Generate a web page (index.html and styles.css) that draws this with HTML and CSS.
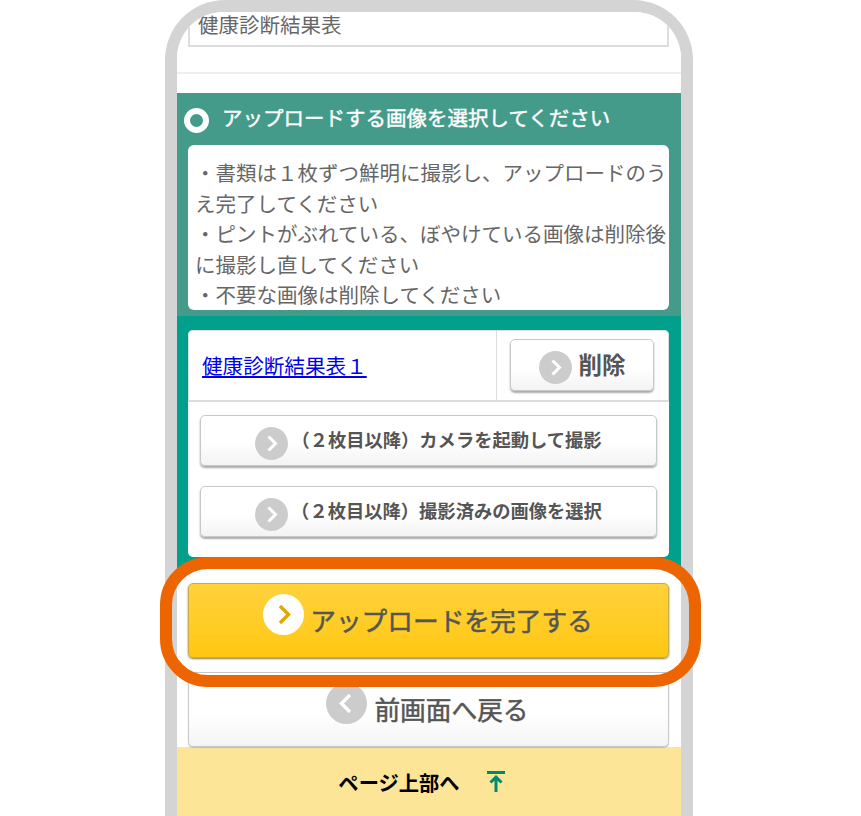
FILE: index.html
```html
<!DOCTYPE html>
<html lang="ja">
<head>
<meta charset="utf-8">
<title>アップロード</title>
<link rel="stylesheet" href="styles.css">
</head>
<body>
<div class="stage">
  <div class="phone">
    <div class="screen">
      <div class="field">健康診断結果表</div>
      <hr class="sep">
      <section class="guide">
        <h2 class="guide-title"><span class="ring"></span>アップロードする画像を選択してください</h2>
        <div class="note">・書類は１枚ずつ鮮明に撮影し、アップロードのう<br>え完了してください<br>・ピントがぶれている、ぼやけている画像は削除後<br>に撮影し直してください<br>・不要な画像は削除してください</div>
      </section>
      <section class="teal">
        <div class="panel">
          <div class="row">
            <div class="row-link"><a href="#">健康診断結果表１</a></div>
            <div class="row-action">
              <button class="btn btn-del">
                <svg class="ico ico-s ico-low" viewBox="0 0 33 33"><circle cx="16.5" cy="16.5" r="16.5" fill="#cccccc"/><path d="M13.5 9.500l7 7-7 7" fill="none" stroke="#fff" stroke-width="3"/></svg>
                <span>削除</span>
              </button>
            </div>
          </div>
          <div class="actions">
            <button class="btn btn-wide">
              <svg class="ico ico-s ico-low" viewBox="0 0 33 33"><circle cx="16.5" cy="16.5" r="16.5" fill="#cccccc"/><path d="M13.5 9.500l7 7-7 7" fill="none" stroke="#fff" stroke-width="3"/></svg>
              <span>（２枚目以降）カメラを起動して撮影</span>
            </button>
            <button class="btn btn-wide">
              <svg class="ico ico-s ico-low" viewBox="0 0 33 33"><circle cx="16.5" cy="16.5" r="16.5" fill="#cccccc"/><path d="M13.5 9.500l7 7-7 7" fill="none" stroke="#fff" stroke-width="3"/></svg>
              <span>（２枚目以降）撮影済みの画像を選択</span>
            </button>
          </div>
        </div>
      </section>
      <section class="bottom">
        <button class="btn btn-big btn-yellow">
          <svg class="ico ico-l" viewBox="0 0 41 41"><circle cx="20.5" cy="20.5" r="20.5" fill="#fff"/><path d="M17 12l8.500 8.500-8.500 8.500" fill="none" stroke="#e2a800" stroke-width="3.400"/></svg>
          <span>アップロードを完了する</span>
        </button>
        <button class="btn btn-big btn-back">
          <svg class="ico ico-l" viewBox="0 0 41 41"><circle cx="20.5" cy="20.5" r="20.5" fill="#cccccc"/><path d="M24 12l-8.500 8.500 8.500 8.500" fill="none" stroke="#fff" stroke-width="3.400"/></svg>
          <span>前画面へ戻る</span>
        </button>
      </section>
      <footer class="totop">
        <span>ページ上部へ</span>
        <svg class="up" viewBox="0 0 18 21"><path d="M0 1.500h18M9 21V6M3.500 11.500L9 6l5.500 5.500" fill="none" stroke="#00896e" stroke-width="3"/></svg>
      </footer>
    </div>
  </div>
  <div class="highlight"></div>
</div>
</body>
</html>
```
FILE: styles.css
```css
* { box-sizing: border-box; }
html, body { margin: 0; padding: 0; background: #fff; }
body {
  font-family: "Noto Sans CJK JP", "Noto Sans", sans-serif;
  color: #555;
}
.stage {
  position: relative;
  width: 861px;
  height: 816px;
  padding-left: 165px;
  overflow: hidden;
}
.phone {
  width: 528px;
  height: 816px;
  border: 12px solid #d4d4d4;
  border-bottom: 0;
  border-radius: 60px 60px 0 0;
}
.screen {
  height: 804px;
  overflow: hidden;
  background: #fff;
  border-radius: 46px 46px 0 0;
}
.field {
  display: flex;
  align-items: center;
  height: 45px;
  margin: -10px 12px 0 11px;
  padding: 0 0 1px 8px;
  border: 2px solid #dddddd;
  font-size: 20.5px;
  line-height: 1;
  color: #666;
}
.sep {
  height: 2px;
  margin: 25px 0 19px;
  border: 0;
  background: #eeeeee;
}
.guide {
  height: 223px;
  background: #459b8a;
}
.guide-title {
  display: flex;
  align-items: center;
  gap: 13px;
  height: 52px;
  margin: 0;
  padding: 0 0 4px 7px;
  font-size: 20.5px;
  font-weight: 400;
  -webkit-text-stroke: 0.4px #fff;
  color: #fff;
  white-space: nowrap;
}
.ring {
  width: 25px;
  height: 25px;
  margin-top: 6px;
  border: 6px solid #fff;
  border-radius: 50%;
}
.note {
  height: 165px;
  margin: 0 12px 0 11px;
  padding: 12px 0 0 7px;
  overflow: hidden;
  background: #fff;
  border-radius: 6px;
  font-size: 20.5px;
  line-height: 30.5px;
  color: #666;
  white-space: nowrap;
}
.teal {
  height: 253px;
  padding: 14px 12px 0 11px;
  background: #00a08c;
}
.panel {
  height: 227px;
  background: #fff;
  border-radius: 5px;
}
.row {
  display: flex;
  height: 72px;
  border: 1px solid #dddddd;
  border-bottom-width: 2px;
  border-radius: 5px 5px 0 0;
}
.row-link {
  display: flex;
  align-items: center;
  width: 308px;
  padding: 0 0 1px 13px;
  border-right: 1px solid #dddddd;
  font-size: 20.6px;
}
.row-link a { color: #0000ee; }
.row-action {
  flex: 1;
  padding: 8px 14px 0 13px;
}
.btn {
  display: flex;
  align-items: center;
  justify-content: center;
  width: 100%;
  padding: 0;
  font-family: inherit;
  font-weight: 700;
  color: #555;
  border: 1px solid #c8c8c8;
  border-radius: 5px;
  background: linear-gradient(#ffffff 55%, #f3f3f3);
  box-shadow: 0 2px 2px #aaaaaa;
  white-space: nowrap;
}
.ico { display: block; flex: none; }
.ico-s { width: 33px; height: 33px; }
.ico-l { width: 41px; height: 41px; margin-bottom: 12px; }
.ico-low { margin-top: 5px; }
.btn-del {
  height: 52px;
  gap: 7px;
  font-size: 23.500px;
}
.btn-del span { margin-bottom: 3px; }
.actions {
  display: flex;
  flex-direction: column;
  gap: 20px;
  padding: 13px 12px 0 12px;
}
.btn-wide {
  height: 51px;
  gap: 3px;
  font-size: 18.300px;
}
.btn-wide span { margin-bottom: 3px; }
.bottom {
  display: flex;
  flex-direction: column;
  gap: 14px;
  height: 178px;
  padding: 14px 12px 0 11px;
}
.btn-big {
  flex: none;
  height: 75px;
  gap: 6px;
  padding-right: 1px;
  font-size: 25.700px;
  font-weight: 400;
  -webkit-text-stroke: 0.5px #555;
}
.btn-big span { margin-bottom: 2px; }
.btn-yellow {
  background: linear-gradient(#ffd23c, #ffcb20 70%, #ffc60e);
  border-color: #c9ab4c;
  box-shadow: 0 1px 2px #8a7a3a;
}
.btn-back {
  gap: 7px;
  padding-right: 2px;
  box-shadow: 0 1px 1px #bbbbbb;
  background: linear-gradient(#ffffff 55%, #f4f4f4);
}
.totop {
  display: flex;
  align-items: center;
  justify-content: center;
  gap: 27px;
  height: 69px;
  padding-right: 15px;
  background: #fde598;
  font-size: 20.300px;
  font-weight: 700;
  color: #000;
}
.up { width: 18px; height: 21px; }
.highlight {
  position: absolute;
  left: 160px;
  top: 557px;
  width: 541px;
  height: 130px;
  border: 12px solid #ec6500;
  border-radius: 48px;
}
```
